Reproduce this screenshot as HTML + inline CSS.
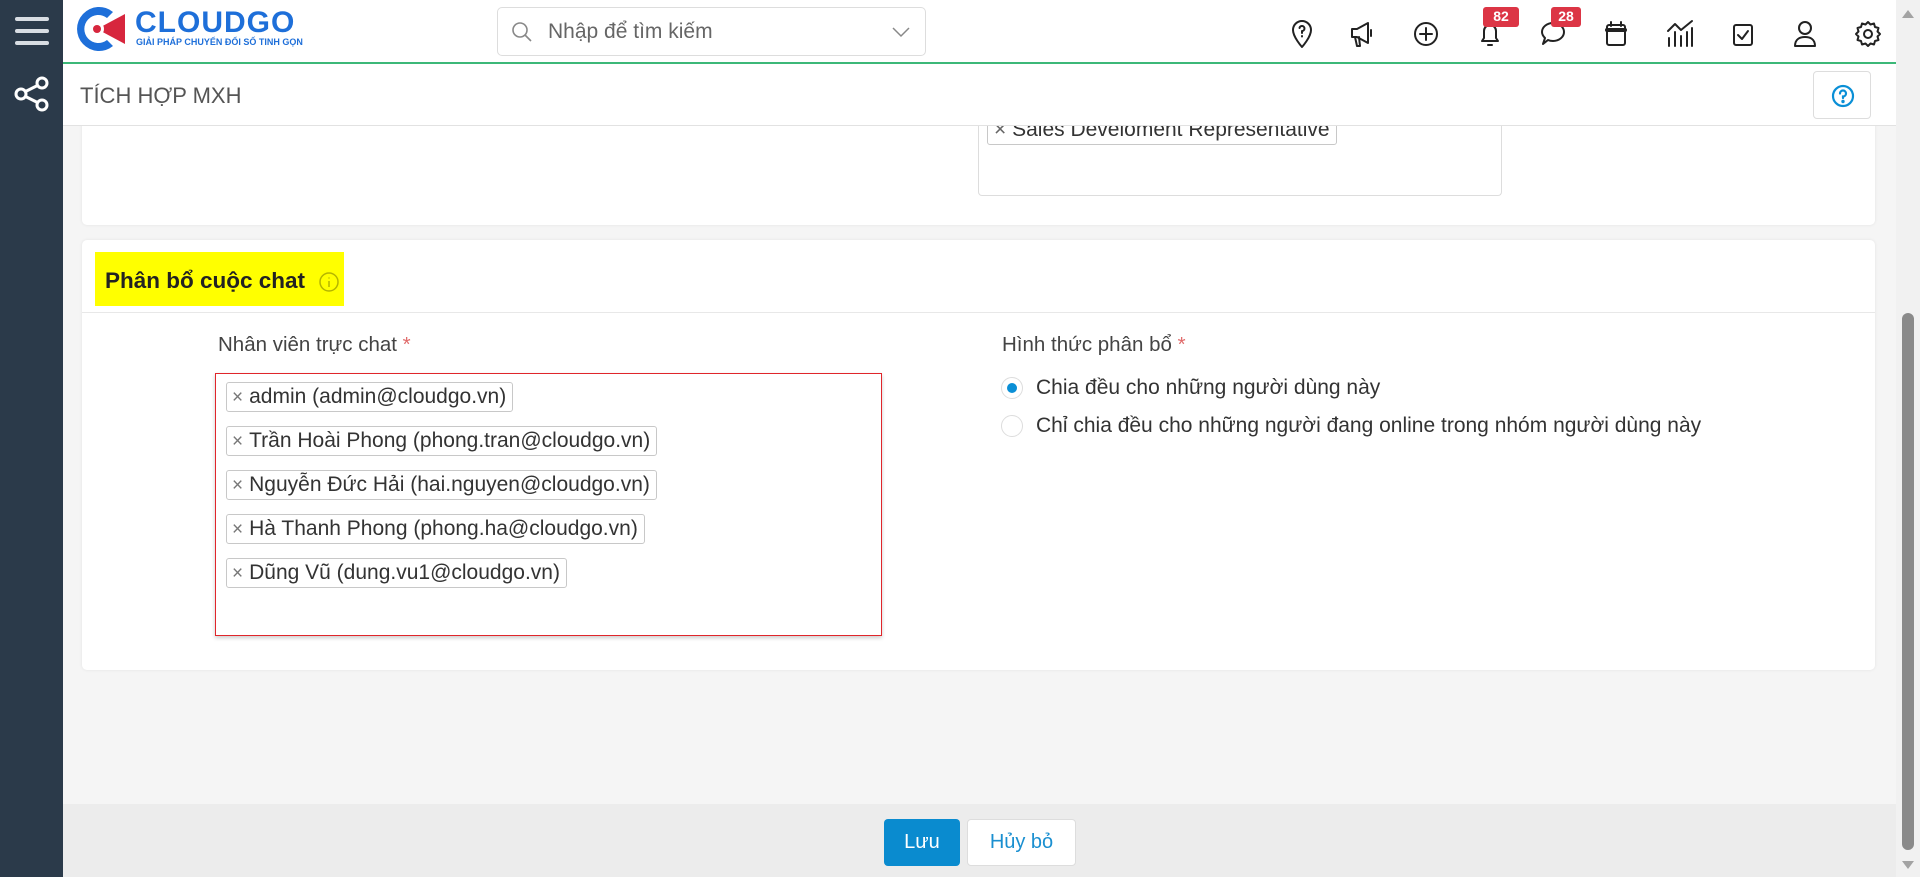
<!DOCTYPE html>
<html><head><meta charset="utf-8">
<style>
*{box-sizing:border-box;margin:0;padding:0}
body{width:1920px;height:877px;overflow:hidden;background:#f5f5f5;font-family:"Liberation Sans","Noto Sans CJK SC",sans-serif;color:#333;position:relative}
.abs{position:absolute}
#side{left:0;top:0;width:63px;height:877px;background:#2b3a4a}
#top{left:63px;top:0;width:1833px;height:64px;background:#fff;border-bottom:2px solid #3cb878}
#hdr{left:63px;top:64px;width:1833px;height:62px;background:#fff;border-bottom:1px solid #e2e2e2}
.card{background:#fff;border-radius:5px;box-shadow:0 0 3px rgba(0,0,0,.08)}
.tag{position:absolute;left:226px;height:30px;border:1px solid #c8c8c8;border-radius:3px;font-size:21px;line-height:28px;padding:0 6px 0 5px;color:#333;white-space:nowrap;background:#fff}
.tag b{font-weight:normal;color:#777;margin-right:6px;font-size:19px}
.badge{background:#dc3545;color:#fff;font-size:14px;font-weight:bold;border-radius:3px;text-align:center;line-height:19px;height:20px}
</style></head><body>
<div id="side" class="abs">
 <div class="abs" style="left:15px;top:17px;width:34px;height:4px;background:#d8dde3;border-radius:2px"></div>
 <div class="abs" style="left:15px;top:29px;width:34px;height:4px;background:#d8dde3;border-radius:2px"></div>
 <div class="abs" style="left:15px;top:41px;width:34px;height:4px;background:#d8dde3;border-radius:2px"></div>
 <svg class="abs" style="left:14px;top:76px" width="36" height="36" viewBox="0 0 36 36" fill="none" stroke="#fff" stroke-width="3"><circle cx="7" cy="18" r="5"/><circle cx="28" cy="7" r="5"/><circle cx="28" cy="29" r="5"/><path d="M11.5 15.5L23.5 9.5M11.5 20.5L23.5 26.5"/></svg>
</div>
<div id="top" class="abs">
 <svg class="abs" style="left:10px;top:4px" width="54" height="50" viewBox="0 0 54 50"><path d="M40 8A22 22 0 1 0 40 42L34 36A14 14 0 1 1 34 14Z" fill="#1e6fd9"/><path d="M24 25L52 10V40Z" fill="#d7263d"/><circle cx="24" cy="25" r="7" fill="#fff"/><circle cx="24" cy="25" r="4" fill="#d7263d"/></svg>
 <div class="abs" style="left:72px;top:6px;font-size:30px;font-weight:bold;color:#1e6fd9;letter-spacing:1px">CLOUDGO</div>
 <div class="abs" style="left:73px;top:37px;font-size:9px;font-weight:bold;color:#1e6fd9">GIẢI PHÁP CHUYỂN ĐỔI SỐ TINH GỌN</div>
 <div class="abs" style="left:434px;top:7px;width:429px;height:49px;border:1px solid #ddd;border-radius:5px">
  <svg class="abs" style="left:12px;top:12px" width="24" height="24" viewBox="0 0 24 24" fill="none" stroke="#888" stroke-width="1.6"><circle cx="10" cy="10" r="7"/><path d="M15 15L21 21"/></svg>
  <div class="abs" style="left:50px;top:12px;font-size:21px;color:#666">Nhập để tìm kiếm</div>
  <svg class="abs" style="left:393px;top:18px" width="20" height="12" viewBox="0 0 20 12" fill="none" stroke="#888" stroke-width="1.5"><path d="M2 2L10 10L18 2"/></svg>
 </div>
 <svg class="abs" style="left:1223px;top:18px" width="1630" height="32" viewBox="0 0 1630 32" fill="none" stroke="#222" stroke-width="2" stroke-linecap="round" stroke-linejoin="round">
  <g transform="translate(3,0)"><path d="M13 29C13 29 4 19 4 12A9 9 0 0 1 22 12C22 19 13 29 13 29Z"/><path d="M10.5 10A2.5 2.5 0 1 1 13 13V15M13 18V18.5"/></g>
  <g transform="translate(62,0)"><path d="M4 11H9L20 5V25L9 19H4Z"/><path d="M7 19L9 28H12L11 19"/><path d="M23 12V18"/></g>
  <g transform="translate(126,0)"><circle cx="14" cy="16" r="11"/><path d="M14 10V22M8 16H20"/></g>
  <g transform="translate(190,0)"><path d="M6 23H22L20 20V13A6 6 0 0 0 8 13V20Z"/><path d="M12 27H16"/></g>
  <g transform="translate(253,0)"><path d="M14 5C20 5 25 9 25 14S20 23 14 23C12 23 10 22.5 9 22L4 26L6 20C4 18 3 16 3 14C3 9 8 5 14 5Z"/></g>
  <g transform="translate(316,0)"><rect x="5" y="7" width="18" height="20" rx="2"/><path d="M5 12H23" stroke-width="4"/><path d="M9 4V8M19 4V8"/></g>
  <g transform="translate(379,0)"><path d="M4 28V20M10 28V14M16 28V18M22 28V14M27 28V10"/><path d="M3 13L10 6L16 12L27 3"/></g>
  <g transform="translate(442,0)"><rect x="6" y="7" width="18" height="20" rx="2"/><path d="M10 17L14 21L20 13"/></g>
  <g transform="translate(504,0)"><circle cx="15" cy="10" r="6"/><path d="M5 28C5 21 10 19 15 19S25 21 25 28Z"/></g>
  <g transform="translate(567,0)"><circle cx="15" cy="16" r="4"/><path d="M15 4L17.5 6.5L21 5.5L22 9L25.5 10L24.5 13.5L27 16L24.5 18.5L25.5 22L22 23L21 26.5L17.5 25.5L15 28L12.5 25.5L9 26.5L8 23L4.5 22L5.5 18.5L3 16L5.5 13.5L4.5 10L8 9L9 5.5L12.5 6.5Z"/></g>
 </svg>
 <div class="abs badge" style="left:1420px;top:7px;width:36px">82</div>
 <div class="abs badge" style="left:1488px;top:7px;width:30px">28</div>
</div>
<div class="abs" style="left:1896px;top:0;width:24px;height:877px;background:#f1f1f1">
 <div class="abs" style="left:6px;top:10px;width:0;height:0;border-left:6px solid transparent;border-right:6px solid transparent;border-bottom:8px solid #a3a3a3"></div>
 <div class="abs" style="left:6px;top:313px;width:12px;height:537px;background:#8a8a8a;border-radius:6px"></div>
 <div class="abs" style="left:6px;top:861px;width:0;height:0;border-left:6px solid transparent;border-right:6px solid transparent;border-top:8px solid #a3a3a3"></div>
</div>
<div class="abs card" style="left:82px;top:100px;width:1793px;height:125px">
 <div class="abs" style="left:896px;top:0;width:524px;height:96px;border:1px solid #ddd;border-top:none;border-radius:0 0 4px 4px"></div>
 <div class="abs" style="left:905px;top:18px;height:27px;border:1px solid #c8c8c8;border-radius:3px;font-size:21px;line-height:22px;padding:0 6px;white-space:nowrap;color:#333;background:#fff"><span style="color:#666">×</span> Sales Develoment Representative</div>
</div>
<div id="hdr" class="abs">
 <div class="abs" style="left:17px;top:19px;font-size:22px;color:#555">TÍCH HỢP MXH</div>
 <div class="abs" style="left:1750px;top:7px;width:58px;height:48px;border:1px solid #ddd;border-radius:4px;background:#fff">
  <svg class="abs" style="left:16px;top:11px" width="26" height="26" viewBox="0 0 26 26" fill="none" stroke="#0a8fd6" stroke-width="2.2"><circle cx="13" cy="13" r="10"/><path d="M10 10.5A3 3 0 1 1 13 13.5V15" stroke-linecap="round"/><circle cx="13" cy="18.5" r=".6" fill="#0a8fd6"/></svg>
 </div>
</div>
<div class="abs card" style="left:82px;top:240px;width:1793px;height:430px">
 <div class="abs" style="left:13px;top:12px;width:249px;height:54px;background:#ffff00"></div>
 <div class="abs" style="left:23px;top:28px;font-size:22.5px;font-weight:bold;color:#222">Phân bổ cuộc chat</div>
 <svg class="abs" style="left:236px;top:31px" width="22" height="22" viewBox="0 0 22 22" fill="none" stroke="#b5b500" stroke-width="1.5"><circle cx="11" cy="11" r="9"/><path d="M11 10V16M11 6.5V7.5"/></svg>
 <div class="abs" style="left:0;top:72px;width:1793px;height:1px;background:#e8e8e8"></div>
 <div class="abs" style="left:136px;top:93px;font-size:20.5px;color:#444">Nhân viên trực chat <span style="color:#e06a6a">*</span></div>
 <div class="abs" style="left:920px;top:93px;font-size:20.5px;color:#444">Hình thức phân bổ <span style="color:#e06a6a">*</span></div>
 <div class="abs" style="left:919px;top:137px;width:22px;height:22px;border:1px solid #ddd;border-radius:50%"><div class="abs" style="left:5px;top:5px;width:10px;height:10px;background:#0a8fd6;border-radius:50%"></div></div>
 <div class="abs" style="left:954px;top:136px;font-size:21px;color:#333">Chia đều cho những người dùng này</div>
 <div class="abs" style="left:919px;top:175px;width:22px;height:22px;border:1px solid #ddd;border-radius:50%"></div>
 <div class="abs" style="left:954px;top:174px;font-size:21px;color:#333">Chỉ chia đều cho những người đang online trong nhóm người dùng này</div>
</div>
<div class="abs" style="left:215px;top:373px;width:667px;height:263px;border:1px solid #e0262b;box-shadow:0 2px 4px rgba(0,0,0,.2);background:#fff"></div>
<div class="tag" style="top:382px"><b>×</b>admin (admin@cloudgo.vn)</div>
<div class="tag" style="top:426px"><b>×</b>Trần Hoài Phong (phong.tran@cloudgo.vn)</div>
<div class="tag" style="top:470px"><b>×</b>Nguyễn Đức Hải (hai.nguyen@cloudgo.vn)</div>
<div class="tag" style="top:514px"><b>×</b>Hà Thanh Phong (phong.ha@cloudgo.vn)</div>
<div class="tag" style="top:558px"><b>×</b>Dũng Vũ (dung.vu1@cloudgo.vn)</div>
<div class="abs" style="left:63px;top:804px;width:1833px;height:73px;background:#ececec">
 <div class="abs" style="left:821px;top:15px;width:76px;height:47px;background:#0a8bcf;border-radius:4px;color:#fff;font-size:20px;text-align:center;line-height:47px">Lưu</div>
 <div class="abs" style="left:904px;top:15px;width:109px;height:47px;background:#fff;border:1px solid #ddd;border-radius:4px;color:#1a8fd0;font-size:20px;text-align:center;line-height:45px">Hủy bỏ</div>
</div>
</body></html>
